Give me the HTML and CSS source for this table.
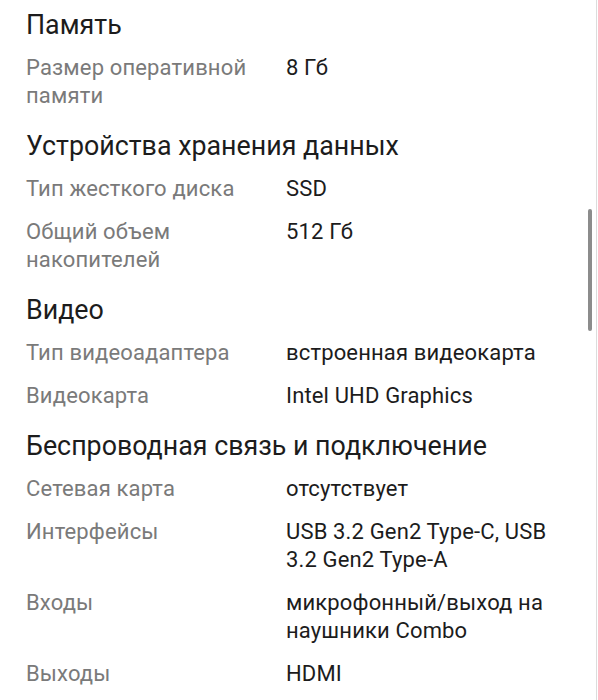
FILE: index.html
```html
<!DOCTYPE html>
<html lang="ru">
<head>
<meta charset="utf-8">
<link rel="stylesheet" href="styles.css">
</head>
<body>
<div class="page">
  <section class="group">
    <h2 class="title first">Память</h2>
    <div class="row"><div class="label">Размер оперативной памяти</div><div class="value">8 Гб</div></div>
  </section>
  <section class="group">
    <h2 class="title">Устройства хранения данных</h2>
    <div class="row"><div class="label">Тип жесткого диска</div><div class="value">SSD</div></div>
    <div class="row"><div class="label">Общий объем накопителей</div><div class="value">512 Гб</div></div>
  </section>
  <section class="group">
    <h2 class="title">Видео</h2>
    <div class="row"><div class="label">Тип видеоадаптера</div><div class="value">встроенная видеокарта</div></div>
    <div class="row"><div class="label">Видеокарта</div><div class="value">Intel UHD Graphics</div></div>
  </section>
  <section class="group">
    <h2 class="title">Беспроводная связь и подключение</h2>
    <div class="row"><div class="label">Сетевая карта</div><div class="value">отсутствует</div></div>
    <div class="row"><div class="label">Интерфейсы</div><div class="value">USB 3.2 Gen2 Type-C, USB 3.2 Gen2 Type-A</div></div>
    <div class="row"><div class="label">Входы</div><div class="value">микрофонный/выход на наушники Combo</div></div>
    <div class="row"><div class="label">Выходы</div><div class="value">HDMI</div></div>
  </section>
  <div class="scroll-thumb"></div>
  <div class="edge"></div>
</div>
</body>
</html>
```
FILE: styles.css
```css
html, body {
  margin: 0;
  padding: 0;
  background: #ffffff;
}
body {
  font-family: Roboto, "Noto Sans", sans-serif;
  overflow: hidden;
}
.page {
  position: relative;
  width: 598px;
  height: 700px;
  overflow: hidden;
  box-sizing: border-box;
  padding: 0 28px 0 26px;
}
.group {
  display: flex;
  flex-direction: column;
}
.title {
  margin: 0;
  font-size: 26.8px;
  font-weight: 400;
  line-height: 32px;
  color: #1c1c1c;
  padding: 12px 0 6px;
}
.title.first {
  padding-top: 9px;
}
.row {
  display: grid;
  grid-template-columns: 260px 1fr;
  padding: 7px 0 8px;
  font-size: 22px;
  letter-spacing: 0.15px;
  line-height: 28px;
}
.label {
  color: #7a7a7a;
  padding-right: 18px;
}
.value {
  color: #1c1c1c;
}
.scroll-thumb {
  position: absolute;
  left: 588px;
  top: 209px;
  width: 4px;
  height: 122px;
  border-radius: 2px;
  background: #8c8c8c;
}
.edge {
  position: absolute;
  left: 596px;
  top: 0;
  width: 1px;
  height: 700px;
  background: #dcdcdc;
}
```
